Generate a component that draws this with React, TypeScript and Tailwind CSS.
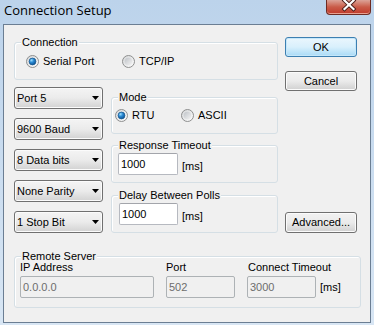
import React from "react";

const ui = "font-['Liberation_Sans',Arial,sans-serif] text-[11px] leading-[13px] text-black";

function Radio({ checked }: { checked?: boolean }) {
    return (
        <svg width="13" height="13" viewBox="0 0 13 13" className="shrink-0">
            <defs>
                <linearGradient id="rOuter" x1="0" y1="0" x2="1" y2="1">
                    <stop offset="0" stopColor="#d2d4d6" />
                    <stop offset="1" stopColor="#ffffff" />
                </linearGradient>
                <linearGradient id="rInner" x1="0" y1="0" x2="1" y2="1">
                    <stop offset="0" stopColor="#bfc3c8" />
                    <stop offset="1" stopColor="#f4f4f4" />
                </linearGradient>
                <radialGradient id="rDot" cx="0.35" cy="0.3" r="0.75">
                    <stop offset="0" stopColor="#9fe0ff" />
                    <stop offset="0.45" stopColor="#2a8ad4" />
                    <stop offset="1" stopColor="#0b4f8f" />
                </radialGradient>
            </defs>
            <circle cx="6.5" cy="6.5" r="6" fill="url(#rOuter)" stroke="#8e8f8f" strokeWidth="1" />
            {checked ? (
                <circle cx="6.5" cy="6.5" r="3.4" fill="url(#rDot)" stroke="#1b5a92" strokeWidth="0.8" />
            ) : (
                <circle cx="6.5" cy="6.5" r="3.8" fill="url(#rInner)" />
            )}
        </svg>
    );
}

function Group({
    label,
    className,
    children,
}: {
    label: string;
    className?: string;
    children?: React.ReactNode;
}) {
    return (
        <div className={`relative rounded-[3px] border border-[#d5dfe5] shadow-[inset_1px_1px_0_#ffffff] ${className ?? ""}`}>
            <span className="absolute left-[6px] top-[-7px] bg-[#f0f0f0] px-[1px] leading-[13px]">{label}</span>
            {children}
        </div>
    );
}

function Combo({ value }: { value: string }) {
    return (
        <div className="flex h-[22px] items-center justify-between rounded-[3px] border border-[#707070] bg-linear-to-b from-[#f4f4f4] via-[#ebebeb] to-[#d2d2d2] pl-[2px] pr-[3px] shadow-[inset_0_0_0_1px_#fbfbfb]">
            <span>{value}</span>
            <svg width="7" height="4" viewBox="0 0 7 4">
                <path d="M0 0h7L3.5 4z" fill="#000" />
            </svg>
        </div>
    );
}

function Field({ value, width, disabled }: { value: string; width: string; disabled?: boolean }) {
    return (
        <div
            className={`flex h-[22px] items-center rounded-[2px] border pl-[2px] ${width} ${
                disabled
                    ? "border-[#adb2b5] bg-[#f0f0f0] text-[#6d6d6d]"
                    : "border-[#b6b9c0] border-t-[#a3a5ab] bg-white"
            }`}>
            {value}
        </div>
    );
}

function Button({ label, primary, className }: { label: string; primary?: boolean; className?: string }) {
    return (
        <div
            className={`flex w-[72px] items-center justify-center rounded-[3px] border ${
                primary
                    ? "border-[#3c7fb1] bg-linear-to-b from-[#eaf6fd] via-[#d9f0fc] to-[#a8daf6] shadow-[inset_0_0_0_1px_#c5e7fa]"
                    : "border-[#707070] bg-linear-to-b from-[#f2f2f2] via-[#ebebeb] to-[#d0d0d0] shadow-[inset_0_0_0_1px_#fbfbfb]"
            } ${className ?? ""}`}>
            {label}
        </div>
    );
}

export default function App() {
    return (
        <div className="flex h-[325px] w-[374px] flex-col bg-linear-to-b from-[#bcd3eb] to-[#d8e6f4] pb-[2px]">
            <div className="flex h-[24px] shrink-0 items-start">
                <div className="pl-[4px] font-['Open_Sans','Noto_Sans',sans-serif] text-[13px] leading-[20px] text-black">
                    Connection Setup
                </div>
                <div className="ml-auto mr-[3px] h-[15px] w-[45px] rounded-b-[4px] border border-t-0 border-[#6e2b22] bg-linear-to-b from-[#dba398] via-[#c95b48] to-[#c0382a] shadow-[inset_0_-1px_0_#e8a090]">
                    <svg width="43" height="14" viewBox="0 0 43 14">
                        <path d="M17.5 0.5L26.5 9M26.5 0.5L17.5 9" stroke="#4a1d18" strokeWidth="4" strokeLinecap="square" />
                        <path d="M17.5 0.5L26.5 9M26.5 0.5L17.5 9" stroke="#ffffff" strokeWidth="2.2" strokeLinecap="square" />
                    </svg>
                </div>
            </div>
            <div className="mx-[3px] flex-1 border border-[#6b7e93] bg-[#f0f0f0]">
                <div className={`${ui} flex flex-col pl-[10px] pt-[12px]`}>
                    <div className="flex items-stretch gap-[7px]">
                        <div className="mt-[5px] flex w-[264px] flex-col">
                            <Group label="Connection" className="flex h-[38px] items-center pl-[11px]">
                                <div className="flex w-[96px] items-center gap-[4px]">
                                    <Radio checked />
                                    <span>Serial Port</span>
                                </div>
                                <div className="flex items-center gap-[4px]">
                                    <Radio />
                                    <span>TCP/IP</span>
                                </div>
                            </Group>
                            <div className="mt-[7px] flex gap-[8px]">
                                <div className="flex w-[89px] flex-col gap-[9px]">
                                    <Combo value="Port 5" />
                                    <Combo value="9600 Baud" />
                                    <Combo value="8 Data bits" />
                                    <Combo value="None Parity" />
                                    <Combo value="1 Stop Bit" />
                                </div>
                                <div className="flex w-[167px] flex-col pt-[10px]">
                                    <Group label="Mode" className="flex h-[37px] items-center pl-[3px]">
                                        <div className="flex w-[66px] items-center gap-[4px]">
                                            <Radio checked />
                                            <span>RTU</span>
                                        </div>
                                        <div className="flex items-center gap-[4px]">
                                            <Radio />
                                            <span>ASCII</span>
                                        </div>
                                    </Group>
                                    <Group label="Response Timeout" className="mt-[11px] flex h-[38px] items-center pl-[6px]">
                                        <Field value="1000" width="w-[60px]" />
                                        <span className="ml-[4px] pt-[5px]">[ms]</span>
                                    </Group>
                                    <Group label="Delay Between Polls" className="mt-[12px] flex h-[38px] items-center pl-[7px]">
                                        <Field value="1000" width="w-[59px]" />
                                        <span className="ml-[4px] pt-[5px]">[ms]</span>
                                    </Group>
                                </div>
                            </div>
                        </div>
                        <div className="flex flex-col">
                            <Button label="OK" primary className="h-[20px]" />
                            <Button label="Cancel" className="mt-[14px] h-[20px]" />
                            <Button label="Advanced..." className="mt-auto h-[21px]" />
                        </div>
                    </div>
                    <Group label="Remote Server" className="mt-[23px] h-[52px] w-[347px] pl-[5px] pt-[4px]">
                        <div className="flex gap-[12px]">
                            <div className="flex flex-col gap-[2px]">
                                <span>IP Address</span>
                                <Field value="0.0.0.0" width="w-[134px]" disabled />
                            </div>
                            <div className="flex flex-col gap-[2px]">
                                <span>Port</span>
                                <Field value="502" width="w-[69px]" disabled />
                            </div>
                            <div className="flex flex-col gap-[2px]">
                                <span className="pl-[1px]">Connect Timeout</span>
                                <div className="flex">
                                    <Field value="3000" width="w-[69px]" disabled />
                                    <span className="ml-[4px] pt-[5px]">[ms]</span>
                                </div>
                            </div>
                        </div>
                    </Group>
                </div>
            </div>
        </div>
    );
}
